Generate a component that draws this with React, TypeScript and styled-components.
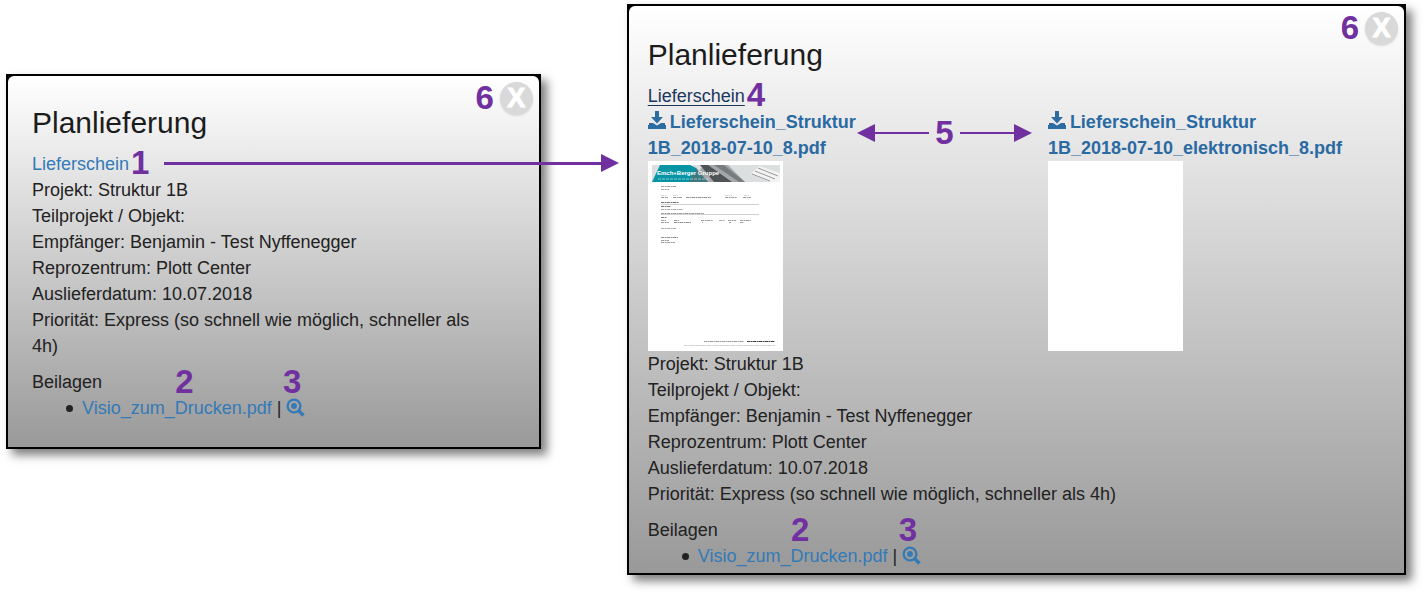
import React from "react";
import styled, { createGlobalStyle } from "styled-components";

const PURPLE = "#7030a0";

const GlobalStyle = createGlobalStyle`
  *, *::before, *::after { box-sizing: border-box; }
  body {
    margin: 0;
    background: #fff;
    color: #222;
    font: 18px/26px "Liberation Sans", Arial, sans-serif;
  }
`;

const Page = styled.main`
  display: flex;
  align-items: flex-start;
  gap: 86px;
  padding: 4px 20px 18px 6px;
`;

const Frame = styled.section<{ $grow: number; $top?: number }>`
  position: relative;
  flex: ${(p) => p.$grow} 1 0;
  min-width: 0;
  margin-top: ${(p) => p.$top ?? 0}px;
  padding: 2px;
  background: #000;
  box-shadow: 6px 6px 9px rgba(0, 0, 0, 0.5);
`;

const Surface = styled.div<{ $pad: string }>`
  padding: ${(p) => p.$pad};
  border-radius: 6px 6px 0 0;
  background: linear-gradient(#fff, #999);
`;

const Title = styled.h2`
  margin: 0 0 11px;
  font-size: 30px;
  line-height: 34px;
  font-weight: 400;
  color: #1c1c1c;
`;

const Corner = styled.div`
  position: absolute;
  top: 7px;
  right: 8px;
  display: flex;
  align-items: center;
  gap: 6px;
`;

const CloseButton = styled.button`
  width: 33px;
  height: 33px;
  padding: 0;
  border: 0;
  border-radius: 50%;
  background: #d9d9d9;
  box-shadow: 0 1px 2px #d9d9d9;
  color: #fff;
  font: 700 27px/33px "Liberation Sans", Arial, sans-serif;
  -webkit-text-stroke: 1px #fff;
`;

const Mark = styled.span`
  color: ${PURPLE};
  font-size: 33px;
  line-height: 34px;
  font-weight: 700;
`;

const Anchor = styled.span`
  position: relative;
  display: inline-block;
`;

const SideMark = styled(Mark)`
  position: absolute;
  left: 100%;
  top: -5px;
  margin-left: 2px;
`;

const TopMark = styled(Mark)<{ $at: number }>`
  position: absolute;
  left: ${(p) => p.$at}%;
  bottom: 22px;
  transform: translateX(-50%);
`;

const Link = styled.a<{ $open?: boolean }>`
  color: ${(p) => (p.$open ? "#1b365d" : "#337ab7")};
  text-decoration: ${(p) => (p.$open ? "underline" : "none")};
  text-underline-offset: 3px;
`;

const Line = styled.div``;

const Attachments = styled.div`
  margin-top: 10px;
`;

const List = styled.ul`
  margin: 0;
  padding-left: 34px;
  list-style: none;
`;

const Item = styled.li`
  &::before {
    content: "";
    display: inline-block;
    width: 7px;
    height: 7px;
    margin-right: 9px;
    border-radius: 50%;
    background: #222;
    vertical-align: 2px;
  }
`;

const Arrow = styled.span<{ $left?: boolean; $weight: number }>`
  flex: 1;
  display: flex;
  align-items: center;
  flex-direction: ${(p) => (p.$left ? "row-reverse" : "row")};
  &::before {
    content: "";
    flex: 1;
    height: ${(p) => p.$weight}px;
    background: ${PURPLE};
  }
  &::after {
    content: "";
    border: 9px solid transparent;
    border-${(p) => (p.$left ? "right" : "left")}: 18px solid ${PURPLE};
    border-${(p) => (p.$left ? "left" : "right")}-width: 0;
  }
`;

const LongArrow = styled.div`
  position: absolute;
  z-index: 1;
  top: 80px;
  left: 158px;
  right: -78px;
  display: flex;
`;

const Files = styled.div`
  position: relative;
  display: grid;
  grid-template-columns: 25fr 21fr;
`;

const FileLink = styled.a`
  display: block;
  color: #2a6aa3;
  font-weight: 700;
  text-decoration: none;
  white-space: nowrap;
`;

const Between = styled.div`
  position: absolute;
  top: 7px;
  left: 209px;
  right: calc(100% * 21 / 46 + 16px);
  display: flex;
  align-items: center;
  gap: 6px;
  height: 34px;
`;

const Sheet = styled.svg`
  display: block;
  width: 135px;
  height: 190px;
  background: #fff;
`;

const DownloadGlyph = styled.svg`
  width: 18px;
  height: 19px;
  margin-right: 4px;
  vertical-align: -2px;
`;

const ZoomGlyph = styled.svg`
  display: block;
  width: 19px;
  height: 19px;
`;

const ZoomLink = styled.a`
  display: inline-block;
  vertical-align: -3px;
`;

function DownloadIcon() {
  return (
    <DownloadGlyph viewBox="0 0 18 19" aria-hidden="true">
      <path fill="#2d6ca2" d="M7 0h4v6h4l-6 6.500L3 6h4z" />
      <path fill="#2d6ca2" d="M1 12h4l4 2.500L13 12h4v2h1v4H0v-4h1z" />
    </DownloadGlyph>
  );
}

function ZoomIcon() {
  return (
    <ZoomGlyph viewBox="0 0 19 19" aria-hidden="true">
      <circle cx="8" cy="8" r="6.400" fill="none" stroke="#337ab7" strokeWidth="2.300" />
      <circle cx="8" cy="8" r="2.900" fill="#337ab7" />
      <path d="M12.500 12.500l5 5" stroke="#337ab7" strokeWidth="3.400" />
    </ZoomGlyph>
  );
}

const inkRuns: [number, number, number, string][] = [
  [13, 25, 15, "#888"], [13, 28, 8, "#999"],
  [13, 34, 6, "#ccc"], [25, 34, 5, "#ccc"], [77, 34, 7, "#ccc"], [96, 34, 5, "#ccc"],
  [13, 36, 7, "#888"], [25, 36, 9, "#888"], [38, 36, 25, "#777"], [77, 36, 12, "#888"], [95, 36, 8, "#888"],
  [13, 41, 18, "#555"], [13, 45, 10, "#555"], [13, 48, 22, "#999"], [13, 52, 43, "#888"],
  [13, 56, 6, "#666"], [13, 59, 5, "#888"], [26, 59, 5, "#888"], [53, 59, 12, "#888"],
  [71, 59, 6, "#999"], [80, 59, 8, "#888"], [92, 59, 11, "#888"],
  [13, 61, 8, "#888"], [26, 61, 17, "#777"], [54, 61, 1, "#888"], [81, 61, 2, "#888"], [92, 61, 4, "#888"],
  [13, 67, 15, "#999"], [13, 76, 17, "#777"], [13, 79, 8, "#888"], [13, 81, 14, "#888"],
  [56, 180, 40, "#888"], [99, 180, 28, "#111"], [36, 184, 91, "#c4c4c4"],
];

function DeliveryNote() {
  return (
    <Sheet viewBox="0 0 135 190" role="img" aria-label="Lieferschein">
      <rect x="4" y="4" width="128" height="17" fill="#dcdfe0" />
      <path d="M56 4L42 21H97L80 4z" fill="#a5a8aa" />
      <path d="M52 4h8l24 17H66z" fill="#4d5356" />
      <path d="M66 4h10l21 17h-6z" fill="#777c7f" />
      <path d="M103 13l8-8 21 7v9h-10z" fill="#f3f3f3" />
      <path d="M104 13l18 7M107 10l20 8M110 7l20 8" stroke="#999" strokeWidth="1" />
      <path d="M12 4h30l6 3 10 14H4z" fill="#0795a5" />
      <path d="M48 7l-7 14h19z" fill="#3e7880" />
      <text x="9" y="14" fill="#fff" fontSize="6" fontWeight="700">
        Emch+Berger Gruppe
      </text>
      <path d="M10 18h52" stroke="#fff" strokeOpacity=".5" strokeDasharray="3 1" />
      <path d="M13 43.500h98M13 53.500h98" stroke="#bbb" strokeWidth=".7" />
      {inkRuns.map(([x, y, w, c]) => (
        <path
          key={`${x}-${y}`}
          d={`M${x} ${y + 0.5}h${w}`}
          stroke={c}
          strokeWidth="1"
          strokeDasharray="3 .6 2 .4"
          opacity=".8"
        />
      ))}
    </Sheet>
  );
}

function Details() {
  return (
    <>
      <Line>Projekt: Struktur 1B</Line>
      <Line>Teilprojekt / Objekt:</Line>
      <Line>Empfänger: Benjamin - Test Nyffenegger</Line>
      <Line>Reprozentrum: Plott Center</Line>
      <Line>Auslieferdatum: 10.07.2018</Line>
      <Line>Priorität: Express (so schnell wie möglich, schneller als 4h)</Line>
      <Attachments>
        Beilagen
        <List>
          <Item>
            <Anchor>
              <Link href="#visio">Visio_zum_Drucken.pdf</Link>
              <TopMark $at={54}>2</TopMark>
            </Anchor>
            {" | "}
            <Anchor>
              <ZoomLink href="#zoom" aria-label="Vorschau">
                <ZoomIcon />
              </ZoomLink>
              <TopMark $at={30}>3</TopMark>
            </Anchor>
          </Item>
        </List>
      </Attachments>
    </>
  );
}

function CloseCorner() {
  return (
    <Corner>
      <Mark>6</Mark>
      <CloseButton aria-label="Schliessen">X</CloseButton>
    </Corner>
  );
}

export default function App() {
  return (
    <>
      <GlobalStyle />
      <Page>
        <Frame $grow={534} $top={70}>
          <Surface $pad="30px 60px 26px 24px">
            <Title>Planlieferung</Title>
            <Anchor>
              <Link href="#lieferschein">Lieferschein</Link>
              <SideMark>1</SideMark>
            </Anchor>
            <Details />
          </Surface>
          <LongArrow>
            <Arrow $weight={3} />
          </LongArrow>
          <CloseCorner />
        </Frame>
        <Frame $grow={780}>
          <Surface $pad="32px 20px 4px 19px">
            <Title>Planlieferung</Title>
            <Anchor>
              <Link href="#lieferschein" $open>
                Lieferschein
              </Link>
              <SideMark>4</SideMark>
            </Anchor>
            <Files>
              <div>
                <FileLink href="#pdf">
                  <DownloadIcon />
                  Lieferschein_Struktur
                  <br />
                  1B_2018-07-10_8.pdf
                </FileLink>
                <DeliveryNote />
              </div>
              <div>
                <FileLink href="#pdf-elektronisch">
                  <DownloadIcon />
                  Lieferschein_Struktur
                  <br />
                  1B_2018-07-10_elektronisch_8.pdf
                </FileLink>
                <Sheet viewBox="0 0 135 190" role="img" aria-label="Leere Seite" />
              </div>
              <Between>
                <Arrow $left $weight={2} />
                <Mark>5</Mark>
                <Arrow $weight={2} />
              </Between>
            </Files>
            <Details />
          </Surface>
          <CloseCorner />
        </Frame>
      </Page>
    </>
  );
}
